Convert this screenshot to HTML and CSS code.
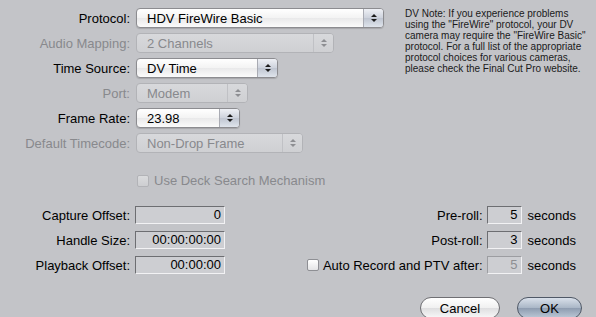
FILE: index.html
```html
<!DOCTYPE html>
<html lang="en">

<head>
    <meta charset="UTF-8">
    <title>Device Control</title>
    <link rel="stylesheet" href="styles.css">
</head>

<body>
    <div class="dialog">
        <div class="top">
            <div class="settings">
                <div class="row">
                    <label>Protocol:</label>
                    <div class="popup w-protocol"><span>HDV FireWire Basic</span><i class="stepper"></i></div>
                </div>
                <div class="row disabled">
                    <label>Audio Mapping:</label>
                    <div class="popup w-audio"><span>2 Channels</span><i class="stepper"></i></div>
                </div>
                <div class="row">
                    <label>Time Source:</label>
                    <div class="popup w-time"><span>DV Time</span><i class="stepper"></i></div>
                </div>
                <div class="row disabled">
                    <label>Port:</label>
                    <div class="popup w-port"><span>Modem</span><i class="stepper"></i></div>
                </div>
                <div class="row">
                    <label>Frame Rate:</label>
                    <div class="popup w-rate"><span>23.98</span><i class="stepper"></i></div>
                </div>
                <div class="row disabled">
                    <label>Default Timecode:</label>
                    <div class="popup w-tc"><span>Non-Drop Frame</span><i class="stepper"></i></div>
                </div>
                <div class="check-row disabled">
                    <span class="checkbox"></span>
                    <span>Use Deck Search Mechanism</span>
                </div>
            </div>
            <p class="note">DV Note: If you experience problems using the "FireWire" protocol, your DV camera may require the "FireWire Basic" protocol. For a full list of the appropriate protocol choices for various cameras, please check the Final Cut Pro website.</p>
        </div>

        <div class="offsets">
            <div class="fields">
                <label>Capture Offset:</label>
                <div class="field">0</div>
                <label>Handle Size:</label>
                <div class="field">00:00:00:00</div>
                <label>Playback Offset:</label>
                <div class="field">00:00:00</div>
            </div>
            <div class="rolls">
                <label>Pre-roll:</label>
                <div class="field small">5</div>
                <span>seconds</span>
                <label>Post-roll:</label>
                <div class="field small">3</div>
                <span>seconds</span>
                <label class="auto"><span class="checkbox"></span>Auto Record and PTV after:</label>
                <div class="field small dim">5</div>
                <span>seconds</span>
            </div>
        </div>

        <div class="buttons">
            <button class="cancel">Cancel</button>
            <button class="ok">OK</button>
        </div>
    </div>
</body>

</html>
```

FILE: styles.css
```css
body {
    margin: 0;
    background: #c3c4c8;
    font-family: 'Liberation Sans', Arial, sans-serif;
    font-size: 13px;
    color: #000;
    width: 596px;
    height: 317px;
    overflow: hidden;
}

.dialog {
    display: flex;
    flex-direction: column;
}

.top {
    display: flex;
    padding-top: 8px;
}

.settings {
    width: 405px;
    display: flex;
    flex-direction: column;
    gap: 5px;
}

.row {
    display: flex;
    align-items: center;
    height: 20px;
}

.row label {
    width: 136px;
    text-align: right;
    padding-right: 6px;
    box-sizing: border-box;
}

.disabled {
    color: #88898d;
}

.popup {
    height: 20px;
    box-sizing: border-box;
    border: 1px solid #8c8c90;
    border-radius: 4px;
    background: linear-gradient(#ffffff, #f3f3f3 50%, #e9e9ea 51%, #fbfbfb);
    display: flex;
    align-items: center;
    box-shadow: 0 1px 1px rgba(0, 0, 0, 0.15);
}

.popup span {
    flex: 1;
    padding-left: 10px;
}

.stepper {
    width: 19px;
    height: 100%;
    border-left: 1px solid #a9abb3;
    border-radius: 0 3px 3px 0;
    background: linear-gradient(#eef0f5, #cdd2dc 50%, #bfc5d1 51%, #dfe4ec);
    position: relative;
}

.stepper::before,
.stepper::after {
    content: '';
    position: absolute;
    left: 7px;
    border-left: 3px solid transparent;
    border-right: 3px solid transparent;
}

.stepper::before {
    top: 5px;
    border-bottom: 3px solid #1c1c1c;
}

.stepper::after {
    top: 10px;
    border-top: 3px solid #1c1c1c;
}

.disabled .popup {
    border-color: #b2b3b7;
    background: linear-gradient(#d8d9dc, #cfd0d3);
    box-shadow: none;
}

.disabled .stepper {
    border-left-color: #c0c1c5;
    background: linear-gradient(#d8d9dc, #cfd0d3);
}

.disabled .stepper::before {
    border-bottom-color: #8d8e92;
}

.disabled .stepper::after {
    border-top-color: #8d8e92;
}

.w-protocol { width: 248px; }
.w-audio { width: 198px; }
.w-time { width: 142px; }
.w-port { width: 112px; }
.w-rate { width: 104px; }
.w-tc { width: 167px; }

.check-row {
    display: flex;
    align-items: center;
    gap: 5px;
    margin-top: 15px;
    padding-left: 137px;
    height: 15px;
}

.checkbox {
    display: inline-block;
    width: 12px;
    height: 12px;
    box-sizing: border-box;
    border: 1px solid #8e8f94;
    border-radius: 2px;
    background: linear-gradient(#ffffff, #e4e4e6);
}

.check-row .checkbox {
    border-color: #b2b3b7;
    background: linear-gradient(#dadbdd, #cdced1);
}

.note {
    margin: 0;
    width: 182px;
    font-size: 10px;
    line-height: 11px;
    color: #1a1a1a;
}

.offsets {
    display: flex;
    justify-content: space-between;
    margin-top: 18px;
    padding-right: 20px;
}

.fields,
.rolls {
    display: grid;
    row-gap: 7px;
    align-items: center;
}

.fields {
    grid-template-columns: 130px 90px;
    column-gap: 5px;
}

.fields label,
.rolls label {
    text-align: right;
}

.rolls {
    grid-template-columns: auto 35px auto;
    column-gap: 4px;
}

.rolls span {
    padding-left: 2px;
}

.auto {
    display: flex;
    align-items: center;
    gap: 4px;
}

.field {
    height: 18px;
    box-sizing: border-box;
    border: 1px solid #f2f2f4;
    border-top-color: #6d6e72;
    border-left-color: #6d6e72;
    background: #cdced2;
    text-align: right;
    padding-right: 3px;
    line-height: 16px;
}

.field.dim {
    color: #8d8e92;
    border-top-color: #9c9da1;
    border-left-color: #9c9da1;
}

.buttons {
    display: flex;
    justify-content: flex-end;
    gap: 17px;
    margin-top: 23px;
    padding-right: 14px;
}

button {
    font-family: inherit;
    font-size: 13px;
    height: 22px;
    border-radius: 11px;
    border: 1px solid #6f6f73;
    padding: 0;
    color: #000;
}

.cancel {
    width: 80px;
    background: linear-gradient(#ffffff, #f0f0f0 50%, #dedee0 51%, #f8f8f8);
}

.ok {
    width: 65px;
    background: linear-gradient(#d9e0ea, #a9b6c6 50%, #8e9cb0 51%, #bcc8d6);
    border-color: #4f5866;
}
```
